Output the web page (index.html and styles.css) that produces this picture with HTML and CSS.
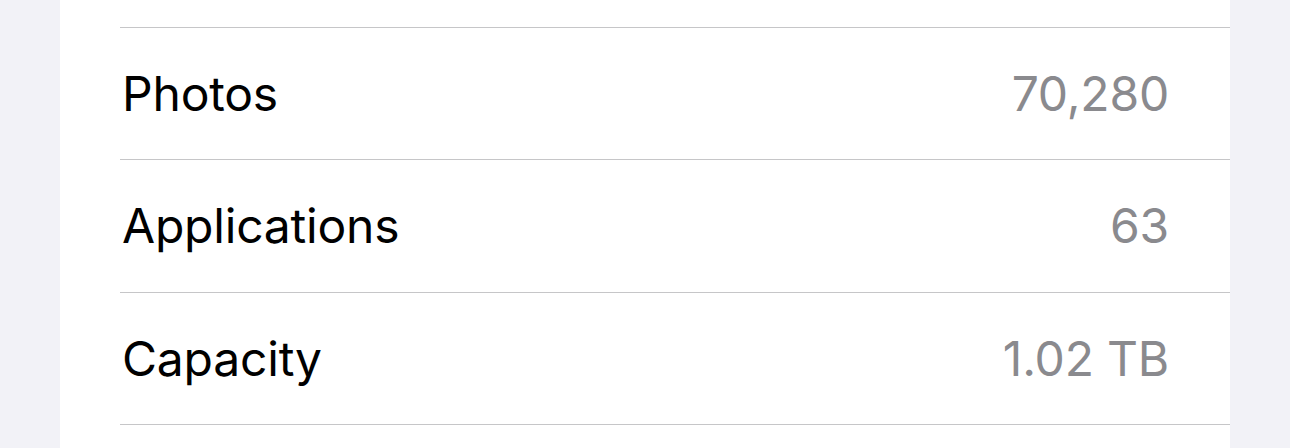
FILE: index.html
```html
<!DOCTYPE html>
<html>
<head>
<meta charset="utf-8">
<link rel="stylesheet" href="styles.css">
</head>
<body>
<div class="page">
  <div class="card">
    <div class="top"></div>
    <div class="row"><span class="label">Photos</span><span class="value">70,280</span></div>
    <div class="row"><span class="label">Applications</span><span class="value">63</span></div>
    <div class="row"><span class="label">Capacity</span><span class="value">1.02 TB</span></div>
    <div class="rest"></div>
  </div>
</div>
</body>
</html>
```

FILE: styles.css
```css
html, body {
  margin: 0;
  padding: 0;
  background: #f2f2f7;
}
.page {
  padding: 0 60px;
  height: 448px;
  overflow: hidden;
}
.card {
  background: #ffffff;
  height: 448px;
  font-family: Inter, "Liberation Sans", sans-serif;
}
.top {
  height: 28px;
  box-sizing: border-box;
  margin-left: 60px;
  border-bottom: 1px solid #c6c6c8;
}
.row {
  height: 132.33px;
  box-sizing: border-box;
  margin-left: 60px;
  padding-right: 61px;
  border-bottom: 1px solid #c6c6c8;
  display: flex;
  align-items: center;
  justify-content: space-between;
  font-size: 48px;
  letter-spacing: -0.2px;
}
.label {
  color: #000000;
  margin-left: 2px;
}
.value {
  color: #8a8a8e;
}
```
